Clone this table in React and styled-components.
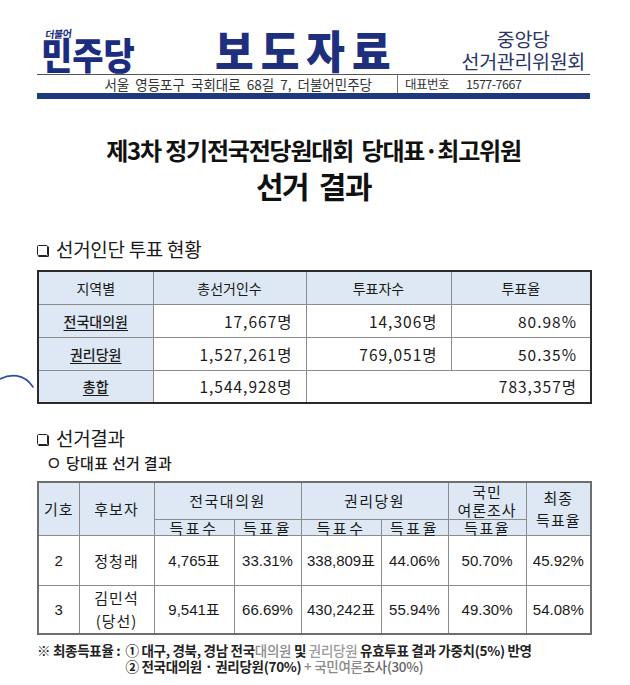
import React from "react";
import styled, { createGlobalStyle } from "styled-components";

const GlobalStyle = createGlobalStyle`
  html, body { margin: 0; padding: 0; background: #fff; }
  body {
    font-family: "Noto Sans CJK KR", "Noto Sans", sans-serif;
    color: #1a1a1a;
  }
  * { box-sizing: border-box; }
`;

const NAVY = "#1c2d80";

const Page = styled.div`
  position: relative;
  width: 630px;
  height: 685px;
  overflow: hidden;
  padding: 20px 40px 0 37px;
  background: #fff;
`;

const TopRow = styled.div`
  display: flex;
  align-items: flex-end;
  height: 55px;
  border-bottom: 1px solid #555;
`;

const Logo = styled.div`
  display: flex;
  flex-direction: column;
  margin-left: 4px;
  width: 174px;
  padding-bottom: 2px;
`;

const LogoSmall = styled.span`
  display: inline-block;
  font-size: 10px;
  font-weight: 700;
  line-height: 11px;
  height: 11px;
  color: ${NAVY};
  margin: 0 0 4px 5px;
  letter-spacing: -0.5px;
  transform: skewX(-10deg) rotate(-3deg);
`;

const LogoMain = styled.span`
  display: block;
  font-size: 34px;
  font-weight: 900;
  line-height: 33px;
  height: 33px;
  letter-spacing: 0px;
  color: ${NAVY};
  transform: scaleY(1.1);
  transform-origin: bottom left;
`;

const PressTitle = styled.div`
  font-size: 42px;
  font-weight: 900;
  line-height: 44px;
  letter-spacing: 7px;
  color: #1e2f7e;
  padding-bottom: 1px;
  transform: scaleY(1.08);
  transform-origin: bottom left;
`;

const Committee = styled.div`
  margin-left: auto;
  margin-right: 5px;
  padding-bottom: 2px;
  text-align: center;
  font-size: 19.5px;
  line-height: 22px;
  letter-spacing: -0.3px;
  color: #2b3468;
`;

const AddressRow = styled.div`
  display: flex;
  height: 18px;
  font-size: 13.5px;
  line-height: 18px;
  color: #333;
`;

const AddressCell = styled.div`
  display: flex;
  align-items: center;
  justify-content: flex-end;
  width: 361px;
  padding-right: 25px;
  border-right: 1px solid #777;
  white-space: pre;
`;

const PhoneCell = styled.div`
  display: flex;
  align-items: center;
  gap: 17px;
  padding-left: 7px;
  font-size: 12.5px;
  letter-spacing: -0.5px;
`;

const BlueBar = styled.div`
  height: 6px;
  background: #1f3a7c;
`;

const TitleBlock = styled.div`
  margin-top: 36px;
  text-align: center;
  font-weight: 700;
  color: #111;
`;

const TitleLine = styled.div`
  font-size: ${(p) => p.$size}px;
  line-height: ${(p) => p.$lh}px;
  letter-spacing: ${(p) => p.$ls}px;
  margin-top: ${(p) => p.$mt || 0}px;
  white-space: pre;
`;

const SectionHeading = styled.div`
  display: flex;
  align-items: center;
  gap: 6px;
  margin-top: ${(p) => p.$mt}px;
  font-size: 19px;
  line-height: 24px;
  color: #1a1a1a;
  letter-spacing: -0.3px;
`;

const BoxMark = styled.span`
  display: inline-block;
  width: 11px;
  height: 11px;
  border: 1.5px solid #222;
  border-radius: 1.5px;
  box-shadow: 1px 1px 0 #222;
  margin-right: 2px;
  margin-top: 2px;
`;

const SubHeading = styled.div`
  display: flex;
  align-items: center;
  gap: 6px;
  margin-top: 3px;
  padding-left: 11px;
  font-size: 15px;
  line-height: 20px;
  font-weight: 500;
  letter-spacing: 0.3px;
`;

const Circle = styled.span`
  font-family: "Liberation Sans", sans-serif;
  font-size: 15px;
`;

const Table = styled.table`
  width: 553px;
  table-layout: fixed;
  border-collapse: collapse;
  margin-top: ${(p) => p.$mt}px;
  border: 2px solid ${(p) => p.$outer};
`;

const Col = styled.col`
  width: ${(p) => p.$w}px;
`;

const Row = styled.tr`
  height: ${(p) => p.$h}px;
`;

const Cell = styled.td`
  padding: 0 ${(p) => (p.$align === "right" ? 13 : 0)}px 0 0;
  border: 1px solid #8c8c8c;
  background: ${(p) => (p.$head ? "#dde8f4" : "#fff")};
  text-align: ${(p) => p.$align || "center"};
  vertical-align: middle;
  font-size: ${(p) => p.$fs || 15}px;
  line-height: ${(p) => p.$lh || 18}px;
  letter-spacing: ${(p) => p.$ls ?? 0}px;
  font-weight: ${(p) => p.$fw || 400};
  color: #1a1a1a;
  white-space: nowrap;
`;

const Under = styled.span`
  text-decoration: underline;
  text-underline-offset: 3px;
  font-weight: 500;
`;

const Num = styled.span`
  font-family: "Liberation Sans", "Noto Sans CJK KR", sans-serif;
`;

const Footnote = styled.div`
  display: grid;
  grid-template-columns: auto 1fr;
  column-gap: 5px;
  margin-top: 7px;
  font-size: 13.5px;
  line-height: 16px;
  font-weight: 700;
  letter-spacing: -0.3px;
  color: #222;
`;

const FootLines = styled.div`
  display: flex;
  flex-direction: column;
`;

const Faint = styled.span`
  color: ${(p) => p.$c || "#8a8a8a"};
  font-weight: 500;
`;

const PenStroke = styled.svg`
  position: absolute;
  left: 0;
  top: 368px;
`;

export default function App() {
  return (
    <>
      <GlobalStyle />
      <Page>
        <PenStroke width="40" height="30" viewBox="0 0 40 30">
          <path
            d="M0 11 C 10 6, 24 5, 33 19"
            fill="none"
            stroke="#2c4fb0"
            strokeWidth="1.6"
            strokeLinecap="round"
          />
        </PenStroke>

        <TopRow>
          <Logo>
            <LogoSmall>더불어</LogoSmall>
            <LogoMain>민주당</LogoMain>
          </Logo>
          <PressTitle>보도자료</PressTitle>
          <Committee>
            <div>중앙당</div>
            <div>선거관리위원회</div>
          </Committee>
        </TopRow>
        <AddressRow>
          <AddressCell>{"서울  영등포구  국회대로  68길  7,  더불어민주당"}</AddressCell>
          <PhoneCell>
            <span>대표번호</span>
            <span>1577-7667</span>
          </PhoneCell>
        </AddressRow>
        <BlueBar />

        <TitleBlock>
          <TitleLine $size={24} $lh={30} $ls={-1.2}>
            {"제3차 정기전국전당원대회  당대표·최고위원"}
          </TitleLine>
          <TitleLine $size={30} $lh={36} $ls={-1.5} $mt={2}>
            {"선거  결과"}
          </TitleLine>
        </TitleBlock>

        <SectionHeading $mt={34}>
          <BoxMark />
          <span>선거인단 투표 현황</span>
        </SectionHeading>

        <Table $mt={9} $outer="#2a2a2a">
          <colgroup>
            <Col $w={115} />
            <Col $w={153} />
            <Col $w={145} />
            <Col $w={140} />
          </colgroup>
          <tbody>
            <Row $h={33}>
              <Cell $head $fs={14}>지역별</Cell>
              <Cell $head $fs={14}>총선거인수</Cell>
              <Cell $head $fs={14}>투표자수</Cell>
              <Cell $head $fs={14}>투표율</Cell>
            </Row>
            <Row $h={33}>
              <Cell $head $fs={14}><Under>전국대의원</Under></Cell>
              <Cell $align="right" $fs={15.5} $ls={1}>17,667명</Cell>
              <Cell $align="right" $fs={15.5} $ls={1}>14,306명</Cell>
              <Cell $align="right" $fs={15.5} $ls={1}>80.98%</Cell>
            </Row>
            <Row $h={33}>
              <Cell $head $fs={14}><Under>권리당원</Under></Cell>
              <Cell $align="right" $fs={15.5} $ls={1}>1,527,261명</Cell>
              <Cell $align="right" $fs={15.5} $ls={1}>769,051명</Cell>
              <Cell $align="right" $fs={15.5} $ls={1}>50.35%</Cell>
            </Row>
            <Row $h={33}>
              <Cell $head $fs={14}><Under>총합</Under></Cell>
              <Cell $align="right" $fs={15.5} $ls={1}>1,544,928명</Cell>
              <Cell $align="right" $fs={15.5} $ls={1} colSpan={2}>783,357명</Cell>
            </Row>
          </tbody>
        </Table>

        <SectionHeading $mt={22}>
          <BoxMark />
          <span>선거결과</span>
        </SectionHeading>
        <SubHeading>
          <Circle>O</Circle>
          <span>당대표 선거 결과</span>
        </SubHeading>

        <Table $mt={8} $outer="#6e6e6e">
          <colgroup>
            <Col $w={41} />
            <Col $w={75} />
            <Col $w={80} />
            <Col $w={67} />
            <Col $w={80} />
            <Col $w={67} />
            <Col $w={78} />
            <Col $w={65} />
          </colgroup>
          <tbody>
            <Row $h={37}>
              <Cell $head rowSpan={2} $ls={1}>기호</Cell>
              <Cell $head rowSpan={2} $ls={1}>후보자</Cell>
              <Cell $head colSpan={2} $ls={1.5}>전국대의원</Cell>
              <Cell $head colSpan={2} $ls={1.5}>권리당원</Cell>
              <Cell $head $ls={1} $lh={18}>
                국민
                <br />
                여론조사
              </Cell>
              <Cell $head rowSpan={2} $ls={1} $lh={22}>
                최종
                <br />
                득표율
              </Cell>
            </Row>
            <Row $h={16}>
              <Cell $head $ls={2.5} $lh={15}>득표수</Cell>
              <Cell $head $ls={2.5} $lh={15}>득표율</Cell>
              <Cell $head $ls={2.5} $lh={15}>득표수</Cell>
              <Cell $head $ls={2.5} $lh={15}>득표율</Cell>
              <Cell $head $ls={1.5} $lh={15}>득표율</Cell>
            </Row>
            <Row $h={50}>
              <Cell><Num>2</Num></Cell>
              <Cell $ls={1}>정청래</Cell>
              <Cell><Num>4,765</Num>표</Cell>
              <Cell><Num>33.31%</Num></Cell>
              <Cell><Num>338,809</Num>표</Cell>
              <Cell><Num>44.06%</Num></Cell>
              <Cell><Num>50.70%</Num></Cell>
              <Cell><Num>45.92%</Num></Cell>
            </Row>
            <Row $h={48}>
              <Cell><Num>3</Num></Cell>
              <Cell $ls={1} $lh={23}>
                김민석
                <br />
                (당선)
              </Cell>
              <Cell><Num>9,541</Num>표</Cell>
              <Cell><Num>66.69%</Num></Cell>
              <Cell><Num>430,242</Num>표</Cell>
              <Cell><Num>55.94%</Num></Cell>
              <Cell><Num>49.30%</Num></Cell>
              <Cell><Num>54.08%</Num></Cell>
            </Row>
          </tbody>
        </Table>

        <Footnote>
          <span>※ 최종득표율 :</span>
          <FootLines>
            <span>
              ① 대구, 경북, 경남 전국<Faint>대의원</Faint> 및 <Faint $c="#9a9a9a">권리당원</Faint> 유효투표 결과 가중치(5%) 반영
            </span>
            <span>
              ② 전국대의원 · 권리당원(70%) <Faint>+ 국민여론</Faint><Faint $c="#666">조사(30%)</Faint>
            </span>
          </FootLines>
        </Footnote>
      </Page>
    </>
  );
}
